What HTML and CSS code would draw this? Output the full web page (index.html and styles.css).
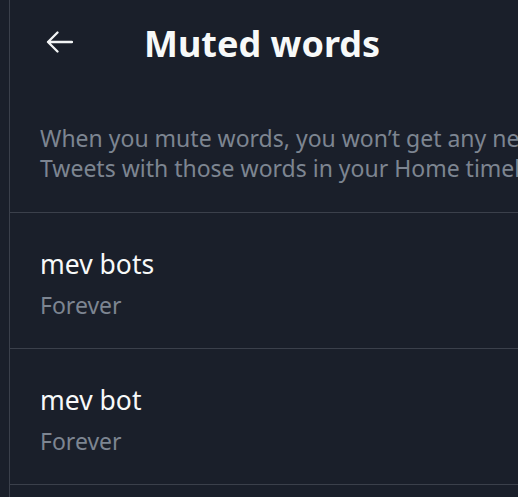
FILE: index.html
```html
<!DOCTYPE html>
<html lang="en">
<head>
<meta charset="utf-8">
<title>Muted words</title>
<link rel="stylesheet" href="styles.css">
</head>
<body>
<main class="page">
  <header class="header">
    <svg class="back" width="27" height="22" viewBox="0 0 27 22" aria-hidden="true">
      <path d="M26 11H2M11.5 1.5L2 11l9.5 9.5" fill="none" stroke="#f2f4f5" stroke-width="2.3" stroke-linecap="round" stroke-linejoin="round"/>
    </svg>
    <h1 class="title">Muted words</h1>
  </header>
  <p class="desc">When you mute words, you won’t get any new notifications for Tweets that include them or see<br>Tweets with those words in your Home timeline.</p>
  <ul class="list">
    <li class="row">
      <div class="word">mev bots</div>
      <div class="dur">Forever</div>
    </li>
    <li class="row">
      <div class="word">mev bot</div>
      <div class="dur">Forever</div>
    </li>
  </ul>
</main>
</body>
</html>
```
FILE: styles.css
```css
html, body {
  margin: 0;
  padding: 0;
  background: #1a1f2a;
  overflow: hidden;
}
body {
  font-family: "Noto Sans", "Open Sans", sans-serif;
  color: #f2f4f5;
}
.page {
  margin-left: 9px;
  width: 1200px;
  min-height: 497px;
  border-left: 1px solid #3b404b;
}
.header {
  display: flex;
  align-items: flex-start;
  padding: 20px 0 0 36px;
}
.back {
  margin-top: 11px;
  flex: none;
}
.title {
  margin: 0 0 0 71px;
  font-size: 36px;
  line-height: 48px;
  font-weight: 700;
  color: #f7f9f9;
}
.desc {
  margin: 0;
  padding: 55px 30px 29px 30px;
  font-size: 23px;
  line-height: 30px;
  color: #7d8591;
  white-space: nowrap;
  border-bottom: 1px solid #3b404b;
}
.list {
  list-style: none;
  margin: 0;
  padding: 0;
}
.row {
  padding: 35px 30px 28px 30px;
  border-bottom: 1px solid #3b404b;
}
.word {
  font-size: 26.5px;
  line-height: 32px;
  color: #f7f9f9;
}
.dur {
  margin-top: 10px;
  font-size: 23px;
  line-height: 30px;
  color: #7d8591;
}
```
